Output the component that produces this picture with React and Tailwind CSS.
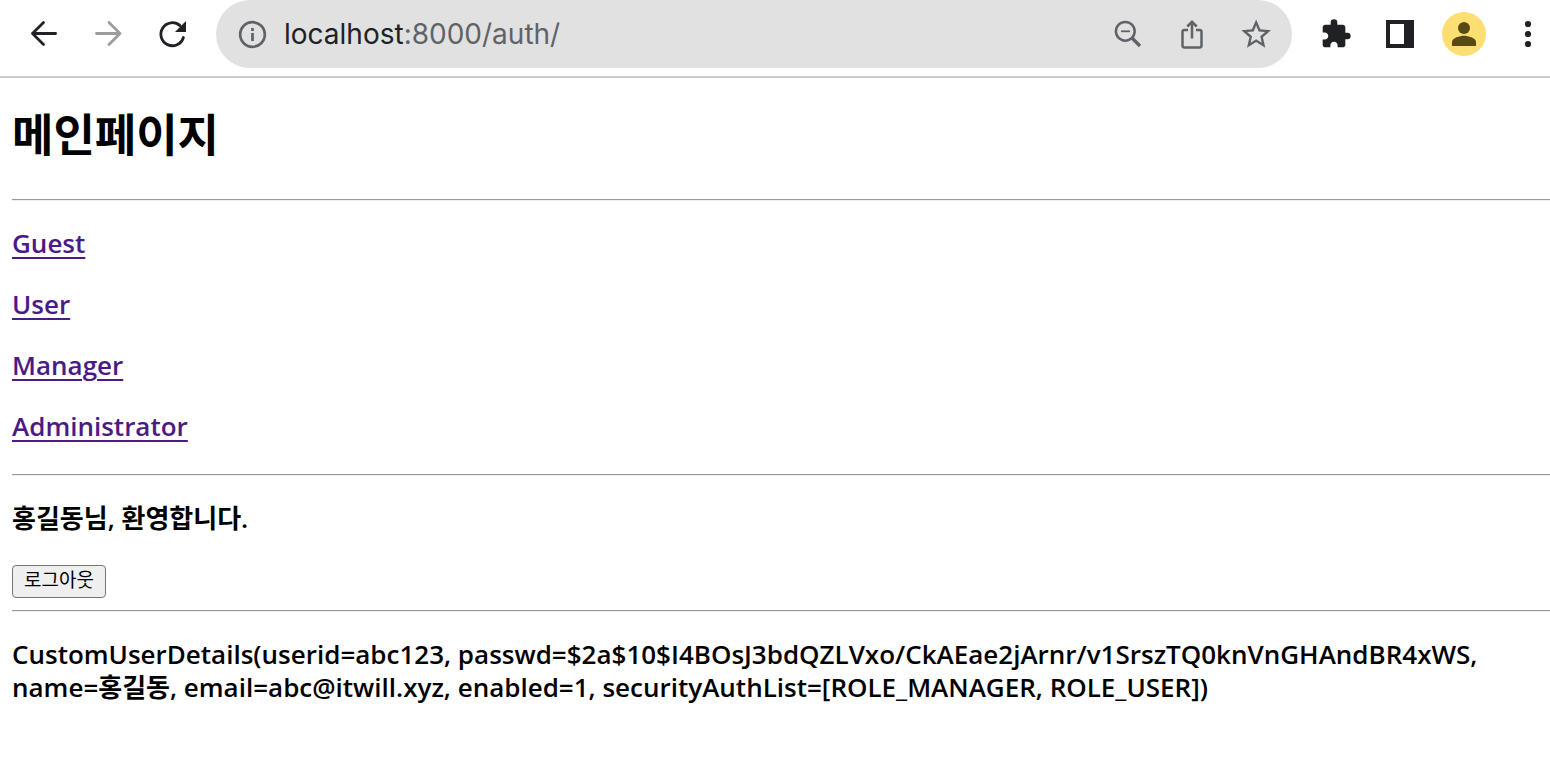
const links = [
  { name: "Guest", href: "#guest" },
  { name: "User", href: "#user" },
  { name: "Manager", href: "#manager" },
  { name: "Administrator", href: "#admin" },
];

function Toolbar() {
  return (
    <header className="flex items-center h-[78px] pb-2 pl-7 border-b-2 border-[#cbcbcb] text-[#202124]">
      <nav className="flex items-center gap-8">
        <button type="button" aria-label="Back">
          <svg className="size-8" viewBox="0 0 32 32" fill="none" stroke="currentColor" strokeWidth="2.8" strokeLinecap="round" strokeLinejoin="round">
            <path d="M27.6 15.5H4.5M15.5 4.5 4.5 15.5l11 11" />
          </svg>
        </button>
        <button type="button" aria-label="Forward" className="text-[#9c9c9c]">
          <svg className="size-8" viewBox="0 0 32 32" fill="none" stroke="currentColor" strokeWidth="2.8" strokeLinecap="round" strokeLinejoin="round">
            <path d="M4.5 15.5H28M17 4.5l11 11-11 11" />
          </svg>
        </button>
        <button type="button" aria-label="Reload">
          <svg className="size-8" viewBox="0 0 32 32" fill="none">
            <path d="M27.4 19.5A11.5 11.5 0 1 1 24 7.6" stroke="currentColor" strokeWidth="2.8" strokeLinecap="round" />
            <path d="M30 3v11H19z" fill="currentColor" />
          </svg>
        </button>
      </nav>

      <div className="flex items-center flex-1 h-[68px] ml-7 px-5 rounded-full bg-[#e1e1e1] text-[#5f6368]">
        <svg className="size-8" viewBox="0 0 32 32" fill="none" stroke="currentColor" strokeWidth="2.7">
          <circle cx="16.5" cy="16.5" r="12.3" />
          <path d="M16.5 15v8M16.5 10v3" />
        </svg>
        <p className="flex-1 ml-4 font-['Inter',sans-serif] text-[28px] leading-8">
          <span className="text-[#202124]">localhost</span>:8000/auth/
        </p>
        <div className="flex items-center gap-8">
          <button type="button" aria-label="Zoom">
            <svg className="size-8" viewBox="0 0 32 32" fill="none" stroke="currentColor">
              <circle cx="13.3" cy="13.3" r="9.4" strokeWidth="2.5" />
              <path d="M9 13.3h9" strokeWidth="1.8" />
              <path d="m20 20 8 8" strokeWidth="3.4" />
            </svg>
          </button>
          <button type="button" aria-label="Share">
            <svg className="size-8" viewBox="0 0 32 32" fill="none" stroke="currentColor" strokeWidth="2.5">
              <path d="M12 12H8.5a2 2 0 0 0-2 2v13.5a2 2 0 0 0 2 2h15a2 2 0 0 0 2-2V14a2 2 0 0 0-2-2H20" />
              <path d="M16 20.500V4M11.3 8.5 16 3.8l4.7 4.7" />
            </svg>
          </button>
          <button type="button" aria-label="Bookmark">
            <svg className="size-8" viewBox="1.1 1 21.6 21.6" fill="currentColor">
              <path d="M22 9.24l-7.19-.62L12 2 9.19 8.63 2 9.24l5.46 4.73L5.82 21 12 17.27 18.18 21l-1.63-7.03zM12 15.4l-3.76 2.27 1-4.28-3.32-2.88 4.38-.38L12 6.1l1.71 4.04 4.38.38-3.32 2.88 1 4.28z" />
            </svg>
          </button>
        </div>
      </div>

      <div className="flex items-center ml-7">
        <button type="button" aria-label="Extensions">
          <svg className="size-8" viewBox="0 0 24 24" fill="currentColor">
            <path d="M20.5 11H19V7c0-1.1-.9-2-2-2h-4V3.5a2.5 2.5 0 0 0-5 0V5H4c-1.1 0-1.99.9-1.99 2v3.8H3.5c1.49 0 2.7 1.21 2.7 2.7s-1.21 2.7-2.7 2.7H2V20c0 1.1.9 2 2 2h3.8v-1.5c0-1.49 1.21-2.7 2.7-2.7s2.7 1.21 2.7 2.7V22H17c1.1 0 2-.9 2-2v-4h1.5a2.5 2.5 0 0 0 0-5z" />
          </svg>
        </button>
        <button type="button" aria-label="Side panel" className="ml-8">
          <svg className="size-8" viewBox="0 0 32 32" fill="currentColor" fillRule="evenodd">
            <path d="M2 2h28v28H2zM6 6v20h14V6z" />
          </svg>
        </button>
        <button type="button" aria-label="Profile" className="ml-[26px] rounded-full bg-[#fbdf72]">
          <svg className="size-11" viewBox="0 0 44 44" fill="#594a14">
            <circle cx="22" cy="16" r="6" />
            <path d="M10 34v-4c0-4 8-6.2 12-6.2S34 26 34 30v4z" />
          </svg>
        </button>
        <button type="button" aria-label="Menu" className="ml-5">
          <svg className="w-11 h-8" viewBox="0 0 44 32" fill="currentColor">
            <circle cx="22" cy="6" r="3.1" />
            <circle cx="22" cy="16" r="3.1" />
            <circle cx="22" cy="26" r="3.1" />
          </svg>
        </button>
      </div>
    </header>
  );
}

function Divider() {
  return <hr className="h-[2px] border-t border-b border-t-[#999999] border-b-[#eeeeee]" />;
}

export default function App() {
  return (
    <div className="min-h-screen bg-white text-black">
      <Toolbar />
      <main className="pl-3 font-['Open_Sans','Noto_Sans_CJK_KR',sans-serif] text-[26px] leading-[33px] font-semibold">
        <h1 className="pt-7 pb-9 text-[45px] leading-[57px] font-bold">메인페이지</h1>
        <Divider />
        <ul className="flex flex-col gap-7 pt-[26px] pb-[31px]">
          {links.map((link) => (
            <li key={link.name}>
              <a href={link.href} className="text-[#4b1a86] underline decoration-2 underline-offset-4">
                {link.name}
              </a>
            </li>
          ))}
        </ul>
        <Divider />
        <h3 className="pt-[26px] pb-[30px]">홍길동님, 환영합니다.</h3>
        <button
          type="button"
          className="block h-[33px] px-[11px] pb-1 mb-3 rounded-[4px] border border-[#767676] bg-[#efefef] text-[19px] leading-7 font-normal"
        >
          로그아웃
        </button>
        <Divider />
        <h3 className="pt-[26px]">
          CustomUserDetails(userid=abc123, passwd=$2a$10$I4BOsJ3bdQZLVxo/CkAEae2jArnr/v1SrszTQ0knVnGHAndBR4xWS,
          name=홍길동, email=abc@itwill.xyz, enabled=1, securityAuthList=[ROLE_MANAGER, ROLE_USER])
        </h3>
      </main>
    </div>
  );
}
